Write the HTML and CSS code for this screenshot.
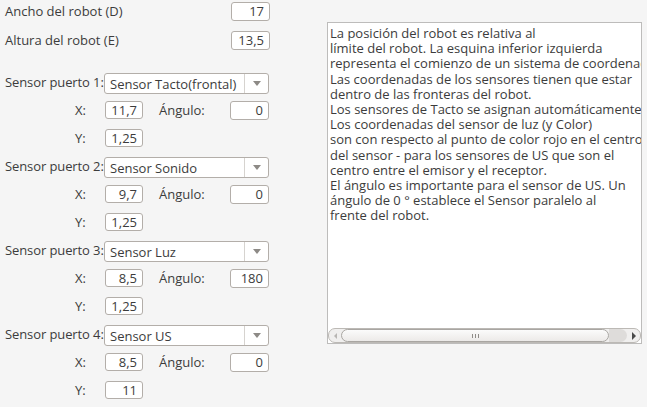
FILE: index.html
```html
<!DOCTYPE html>
<html lang="es">
<head>
    <meta charset="UTF-8">
    <title>Configuración del robot</title>
    <link rel="stylesheet" href="styles.css">
</head>
<body>
    <div class="main-container">
        <!-- Robot dimensions and sensors -->
        <div class="config-panel">
            <div class="dim-row">
                <span class="label">Ancho del robot (D)</span>
                <span class="field wide">17</span>
            </div>
            <div class="dim-row">
                <span class="label">Altura del robot (E)</span>
                <span class="field wide">13,5</span>
            </div>

            <div class="sensor-list">
                <div class="sensor-block">
                    <div class="sensor-row">
                        <span class="label port">Sensor puerto 1:</span>
                        <div class="combo"><span class="combo-text">Sensor Tacto(frontal)</span><span class="combo-btn"><span class="arrow"></span></span></div>
                    </div>
                    <div class="coord-row">
                        <span class="label axis">X:</span>
                        <span class="field">11,7</span>
                        <span class="label angle">Ángulo:</span>
                        <span class="field wide">0</span>
                    </div>
                    <div class="coord-row">
                        <span class="label axis">Y:</span>
                        <span class="field">1,25</span>
                    </div>
                </div>

                <div class="sensor-block">
                    <div class="sensor-row">
                        <span class="label port">Sensor puerto 2:</span>
                        <div class="combo"><span class="combo-text">Sensor Sonido</span><span class="combo-btn"><span class="arrow"></span></span></div>
                    </div>
                    <div class="coord-row">
                        <span class="label axis">X:</span>
                        <span class="field">9,7</span>
                        <span class="label angle">Ángulo:</span>
                        <span class="field wide">0</span>
                    </div>
                    <div class="coord-row">
                        <span class="label axis">Y:</span>
                        <span class="field">1,25</span>
                    </div>
                </div>

                <div class="sensor-block">
                    <div class="sensor-row">
                        <span class="label port">Sensor puerto 3:</span>
                        <div class="combo"><span class="combo-text">Sensor Luz</span><span class="combo-btn"><span class="arrow"></span></span></div>
                    </div>
                    <div class="coord-row">
                        <span class="label axis">X:</span>
                        <span class="field">8,5</span>
                        <span class="label angle">Ángulo:</span>
                        <span class="field wide">180</span>
                    </div>
                    <div class="coord-row">
                        <span class="label axis">Y:</span>
                        <span class="field">1,25</span>
                    </div>
                </div>

                <div class="sensor-block">
                    <div class="sensor-row">
                        <span class="label port">Sensor puerto 4:</span>
                        <div class="combo"><span class="combo-text">Sensor US</span><span class="combo-btn"><span class="arrow"></span></span></div>
                    </div>
                    <div class="coord-row">
                        <span class="label axis">X:</span>
                        <span class="field">8,5</span>
                        <span class="label angle">Ángulo:</span>
                        <span class="field wide">0</span>
                    </div>
                    <div class="coord-row">
                        <span class="label axis">Y:</span>
                        <span class="field">11</span>
                    </div>
                </div>
            </div>
        </div>

        <!-- Help text -->
        <div class="help-box">
            <div class="help-text">La posición del robot es relativa al
límite del robot. La esquina inferior izquierda
representa el comienzo de un sistema de coordenadas.
Las coordenadas de los sensores tienen que estar
dentro de las fronteras del robot.
Los sensores de Tacto se asignan automáticamente.
Los coordenadas del sensor de luz (y Color)
son con respecto al punto de color rojo en el centro
del sensor - para los sensores de US que son el
centro entre el emisor y el receptor.
El ángulo es importante para el sensor de US. Un
ángulo de 0 ° establece el Sensor paralelo al
frente del robot.</div>
            <div class="hscroll">
                <span class="scroll-btn left"><span class="tri-left"></span></span>
                <span class="scroll-thumb"><span class="grip"></span></span>
                <span class="scroll-trough"></span>
                <span class="scroll-btn right"><span class="tri-right"></span></span>
            </div>
        </div>
    </div>
</body>
</html>
```

FILE: styles.css
```css
/* Global Styles */
body, html {
    margin: 0;
    padding: 0;
    background-color: #f5f5f5;
    font-family: 'Open Sans', 'DejaVu Sans', sans-serif;
    font-size: 13px;
    color: #3c3c3c;
}

.main-container {
    display: flex;
    align-items: flex-start;
}

/* Left panel */
.config-panel {
    width: 270px;
    padding-left: 5px;
    box-sizing: border-box;
    padding-top: 2px;
}

.dim-row {
    display: flex;
    justify-content: space-between;
    align-items: center;
    height: 19px;
    margin-bottom: 10px;
}

.label {
    line-height: 19px;
    white-space: nowrap;
}

.field {
    box-sizing: border-box;
    width: 38px;
    height: 18px;
    line-height: 16px;
    background-color: #fff;
    border: 1px solid #b3aea9;
    border-radius: 3px;
    text-align: right;
    padding-right: 5px;
}

.field.wide {
    width: 39px;
    height: 19px;
    line-height: 17px;
}

/* sibling margins collapse with the row above */
.sensor-list {
    margin-top: 23px;
}

.sensor-block {
    display: flex;
    flex-direction: column;
}

.sensor-row, .coord-row {
    display: flex;
    align-items: flex-start;
    height: 28px;
}

.coord-row {
    height: 28px;
}

.label.port {
    width: 99px;
    line-height: 19px;
    letter-spacing: -0.1px;
}

.combo {
    display: flex;
    box-sizing: border-box;
    width: 165px;
    height: 21px;
    background-color: #fff;
    border: 1px solid #b3aea9;
    border-radius: 3px;
}

.combo-text {
    flex-grow: 1;
    line-height: 20px;
    padding-left: 5px;
    white-space: nowrap;
}

.combo-btn {
    width: 23px;
    border-left: 1px solid #d6d3cf;
    display: flex;
    align-items: center;
    justify-content: center;
}

.arrow {
    width: 0;
    height: 0;
    border-left: 4px solid transparent;
    border-right: 4px solid transparent;
    border-top: 5px solid #8d8a86;
}

.label.axis {
    width: 100px;
    padding-left: 70px;
    box-sizing: border-box;
}

.label.angle {
    width: 87px;
    padding-left: 16px;
    box-sizing: border-box;
}

/* Help box */
.help-box {
    box-sizing: border-box;
    margin-left: 57px;
    margin-top: 22px;
    width: 315px;
    height: 322px;
    background-color: #fff;
    border: 1px solid #bdbcbb;
    display: flex;
    flex-direction: column;
}

.help-text {
    flex-grow: 1;
    overflow: hidden;
    white-space: pre;
    line-height: 15.2px;
    padding: 3px 0 0 2px;
}

.hscroll {
    display: flex;
    height: 13px;
    border: 1px solid #bcb9b5;
    border-radius: 7px;
    background-color: #f0efee;
    overflow: hidden;
}

.scroll-btn {
    width: 12px;
    display: flex;
    align-items: center;
    justify-content: center;
}

.tri-left {
    width: 0;
    height: 0;
    border-top: 3px solid transparent;
    border-bottom: 3px solid transparent;
    border-right: 3px solid #b8b6b3;
}

.tri-right {
    width: 0;
    height: 0;
    border-top: 4px solid transparent;
    border-bottom: 4px solid transparent;
    border-left: 4px solid #4a4a4a;
}

.scroll-thumb {
    box-sizing: border-box;
    width: 268px;
    border: 1px solid #a9a6a2;
    border-radius: 7px;
    background: linear-gradient(#fbfbfb, #eceae8);
    display: flex;
    align-items: center;
    justify-content: center;
}

.grip {
    width: 7px;
    height: 4px;
    background: repeating-linear-gradient(90deg, #8f8c88 0 1px, transparent 1px 3px);
}

.scroll-trough {
    flex-grow: 1;
    background-color: #dedcda;
    border-radius: 0 7px 7px 0;
    margin-right: 1px;
}
```
